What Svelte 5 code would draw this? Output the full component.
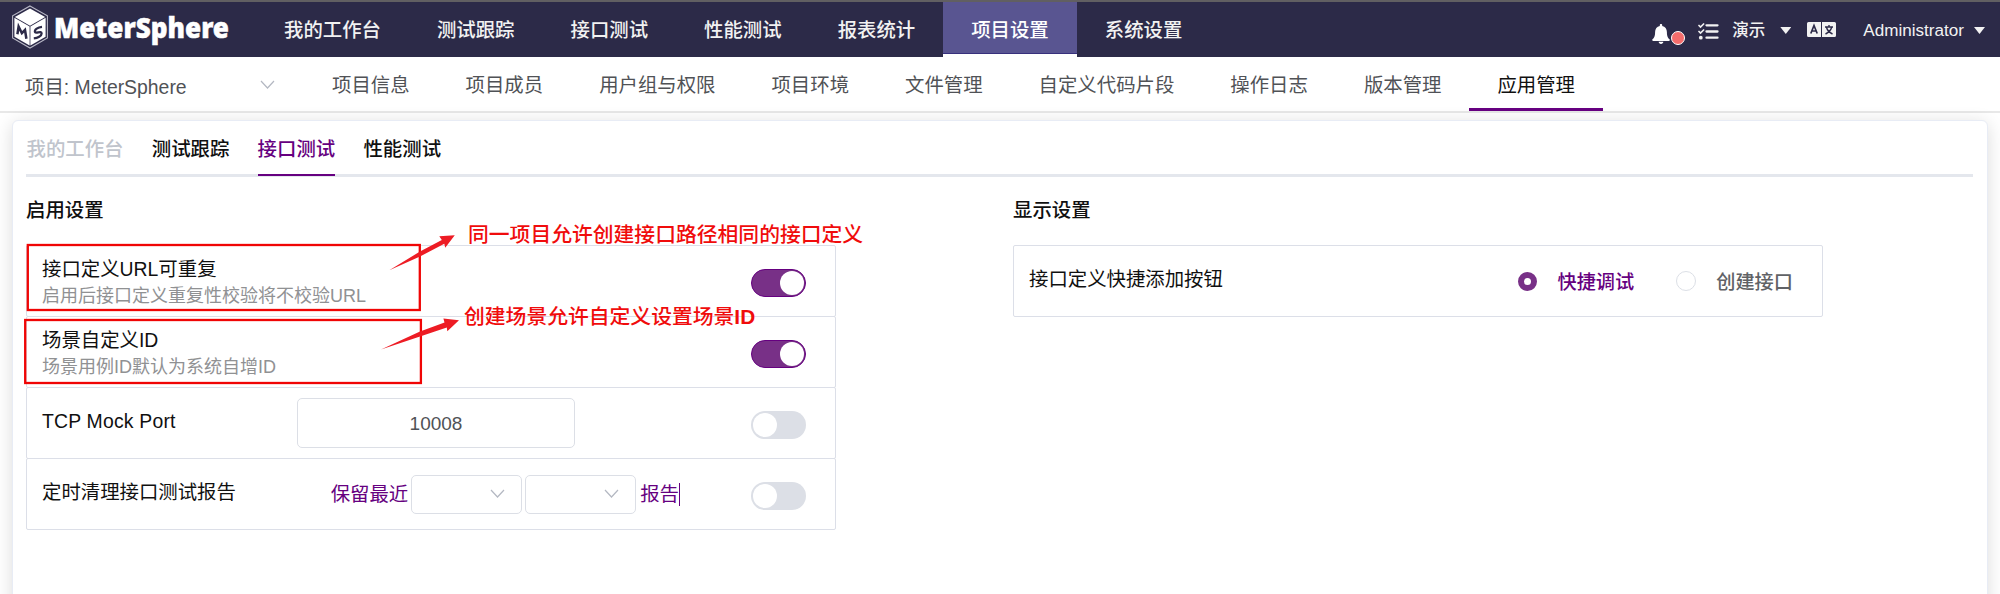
<script>
  const mainNav = ['我的工作台', '测试跟踪', '接口测试', '性能测试', '报表统计', '项目设置', '系统设置'];
  const subNav = ['项目信息', '项目成员', '用户组与权限', '项目环境', '文件管理', '自定义代码片段', '操作日志', '版本管理', '应用管理'];
  const tabs = ['我的工作台', '测试跟踪', '接口测试', '性能测试'];

  let activeMain = $state('项目设置');
  let activeSub = $state('应用管理');
  let activeTab = $state('接口测试');
  let urlRepeat = $state(true);
  let customId = $state(true);
  let mockPort = $state(false);
  let cleanReport = $state(false);
  let quick = $state('debug');
</script>

{#snippet toggle(on, flip)}
  <button class="switch" class:on onclick={flip} aria-label="switch"><span class="knob"></span></button>
{/snippet}

{#snippet chevron()}
  <svg class="chevron" width="15" height="10" viewBox="0 0 15 10"><path d="M1 1l6.5 7L14 1" fill="none" stroke="#b4b8c2" stroke-width="1.2" /></svg>
{/snippet}

<div class="page">
  <header class="top">
    <div class="brand">
      <svg width="38" height="44" viewBox="0 0 38 44">
        <path d="M19 1L36.4 10.8V33L19 43L1.6 33V10.8Z" fill="none" stroke="#b9b8c6" stroke-width="1.1" />
        <path d="M19 3.4L34.2 12L19 20.7L3.800 12Z" fill="#fff" />
        <path d="M3.4 12.800L18.600 21.4V40.600L3.4 31.8Z" fill="#fff" />
        <path d="M34.6 12.800L19.4 21.4V40.600L34.6 31.8Z" fill="#fff" />
        <path d="M6.4 29.2L7.6 21.6L10.9 28.2L14 25L15.4 33.8" fill="none" stroke="#2c2a48" stroke-width="2.5" />
        <path d="M31 21.8C27 22.2 23.2 24.4 24 27C24.8 29 30.6 25.4 30.6 28.4C30.6 31 26.6 33 22.8 33.4" fill="none" stroke="#2c2a48" stroke-width="2.3" />
      </svg>
      <svg class="word" width="180" height="46" viewBox="0 0 180 46">
        <text x="1" y="33" textLength="175" lengthAdjust="spacingAndGlyphs">MeterSphere</text>
      </svg>
    </div>
    <nav class="main-nav">
      {#each mainNav as item}
        <button class:active={item === activeMain} onclick={() => (activeMain = item)}>{item}</button>
      {/each}
    </nav>
    <div class="tools">
      <span class="bell">
        <svg width="18" height="20" viewBox="0 0 18 20"><path d="M9 0c.8 0 1.2.5 1.2 1.3v.6c3 .6 4.700 2.900 4.700 6.100 0 4.400 1 5.800 2.600 7.300.7.700.3 1.700-.7 1.700H1.200c-1 0-1.400-1-.7-1.700 1.600-1.500 2.600-2.900 2.600-7.300 0-3.200 1.700-5.500 4.700-6.100v-.6C7.800.5 8.200 0 9 0zM6.700 17.800h4.600c0 1.300-1 2.200-2.300 2.200s-2.300-.9-2.300-2.200z" fill="#fff" /></svg>
        <i class="dot"></i>
      </span>
      <svg class="list" width="21" height="17" viewBox="0 0 21 17">
        <g fill="none" stroke="#f2f2f2" stroke-linecap="round">
          <path d="M8.500 2.300H19.500M8.500 8.500H19.500M8.500 14.700H19.500" stroke-width="2.300" />
          <path d="M1 2.500l1.500 1.500L5.600 1M1 8.500l1.500 1.500L5.600 7" stroke-width="1.700" />
        </g>
        <circle cx="2.800" cy="14.700" r="1.900" fill="#f2f2f2" />
      </svg>
      <span class="org">演示</span>
      <i class="caret"></i>
      <svg class="lang" width="29" height="15" viewBox="0 0 29 15">
        <path d="M1.500 0H14V15H1.500Q0 15 0 13.500V1.500Q0 0 1.500 0ZM15 0H27.500Q29 0 29 1.500V13.500Q29 15 27.500 15H15Z" fill="#f2f2f2" />
        <path d="M3.800 11.500L7 3.500L10.200 11.500M5 9H9" fill="none" stroke="#2c2a48" stroke-width="1.700" />
        <path d="M18 5H26M22 3V5M24.800 5Q23.500 9.500 18.500 12M19.400 5Q20.500 9.500 25.500 12" fill="none" stroke="#2c2a48" stroke-width="1.400" />
      </svg>
      <span class="user">Administrator</span>
      <i class="caret"></i>
    </div>
  </header>

  <div class="sub">
    <div class="project"><span>项目: MeterSphere</span>{@render chevron()}</div>
    <nav>
      {#each subNav as item}
        <button class:active={item === activeSub} onclick={() => (activeSub = item)}>{item}</button>
      {/each}
    </nav>
  </div>

  <main class="card">
    <div class="tabs">
      {#each tabs as tab, i}
        <button class:disabled={i === 0} class:active={tab === activeTab} disabled={i === 0} onclick={() => (activeTab = tab)}>{tab}</button>
      {/each}
    </div>

    <div class="columns">
      <section>
        <h2>启用设置</h2>
        <div class="rows">
          <div class="row">
            <div class="label double"><span>接口定义URL可重复</span><small>启用后接口定义重复性校验将不校验URL</small></div>
            {@render toggle(urlRepeat, () => (urlRepeat = !urlRepeat))}
          </div>
          <div class="row">
            <div class="label double"><span>场景自定义ID</span><small>场景用例ID默认为系统自增ID</small></div>
            {@render toggle(customId, () => (customId = !customId))}
          </div>
          <div class="row">
            <div class="label single latin"><span>TCP Mock Port</span></div>
            <div class="port">10008</div>
            {@render toggle(mockPort, () => (mockPort = !mockPort))}
          </div>
          <div class="row">
            <div class="label single"><span>定时清理接口测试报告</span></div>
            <div class="keep">
              <span class="recent">保留最近</span>
              <div class="select">{@render chevron()}</div>
              <div class="select">{@render chevron()}</div>
              <span class="report">报告</span>
            </div>
            {@render toggle(cleanReport, () => (cleanReport = !cleanReport))}
          </div>
        </div>
      </section>

      <section>
        <h2>显示设置</h2>
        <div class="rows">
          <div class="row">
            <div class="label single"><span>接口定义快捷添加按钮</span></div>
            <div class="radios">
              <button class:checked={quick === 'debug'} onclick={() => (quick = 'debug')}><i></i>快捷调试</button>
              <button class:checked={quick === 'create'} onclick={() => (quick = 'create')}><i></i>创建接口</button>
            </div>
          </div>
        </div>
      </section>
    </div>
  </main>

  <div class="notes">
    <svg width="900" height="400" viewBox="0 0 900 400">
      <g fill="none" stroke="#f00505" stroke-width="2.300">
        <rect x="27.800" y="245" width="392" height="65" />
        <rect x="25.200" y="320" width="395.700" height="63" />
      </g>
      <path d="M389.300 270.300L420 251.500L441.800 240L439.300 236.200L454.800 235.200L445.200 247.800L444.300 243.800L420 256.500Z" fill="#ed1c24" />
      <path d="M381 349.500L420 331.500L444.500 322.600L443.400 318.600L459 320.300L447.300 331.300L446.800 327.600L420 336.500Z" fill="#ed1c24" />
    </svg>
    <p class="note-one">同一项目允许创建接口路径相同的接口定义</p>
    <p class="note-two">创建场景允许自定义设置场景<b>ID</b></p>
  </div>
</div>

<style>
  :global(body) { margin: 0; background: #fff; }
  .page {
    position: relative;
    width: 2000px;
    height: 594px;
    overflow: hidden;
    font-family: "Liberation Sans", "Noto Sans CJK SC", sans-serif;
    font-size: 19.4px;
    color: #101010;
    box-sizing: border-box;
  }
  .page :global(*) { box-sizing: border-box; }
  button { font: inherit; color: inherit; border: 0; background: none; padding: 0; margin: 0; white-space: nowrap; }
  .top {
    display: flex;
    height: 57px;
    background: #2c2a48;
    border-top: 2px solid #615f62;
    color: #f2f2f2;
  }
  .brand { display: flex; width: 256px; padding: 3px 0 0 10.500px; }
  .word { margin: 0 0 0 4px; overflow: visible; }
  .word text { font-family: "Noto Sans", sans-serif; font-weight: 900; font-size: 28px; fill: #fff; stroke: #fff; stroke-width: .5px; }
  .main-nav { display: flex; }
  .main-nav button { height: 55px; padding: 0 28px; font-weight: 500; line-height: 54px; }
  .main-nav .active { background: linear-gradient(#595591 51px, #37307c 51px 52px, #fff 52px); color: #fff; }
  .tools { display: flex; margin-left: auto; padding-right: 15px; align-items: flex-start; }
  .bell { display: flex; position: relative; width: 46px; padding-top: 22px; }
  .dot { position: absolute; left: 19px; top: 29px; width: 14px; height: 14px; border-radius: 50%; background: #f56c6c; border: 1.500px solid #fff; }
  .list { margin-top: 21px; }
  .org { font-size: 16.500px; font-weight: 500; line-height: 24px; margin: 16px 15px 0 13px; }
  .caret { width: 11px; height: 7px; margin-top: 25px; background: #f2f2f2; clip-path: polygon(0 0, 100% 0, 50% 100%); }
  .lang { margin: 20px 27px 0 16px; }
  .user { font-size: 17.100px; line-height: 24px; margin: 17px 10px 0 0; }
  .sub { display: flex; height: 56px; border-bottom: 2px solid #e8e8e8; color: #505256; }
  .project { display: flex; width: 304px; padding: 3px 29px 0 25px; align-items: center; justify-content: space-between; }
  .project .chevron { margin-top: -1px; }
  .sub nav { display: flex; }
  .sub nav button { height: 54px; padding: 0 28px; line-height: 56px; }
  .sub nav .active { color: #101010; border-bottom: 3px solid #660080; }
  .card {
    width: 1976px;
    height: 520px;
    margin: 7px 0 0 12px;
    padding: 0 14px 0 13px;
    border: 1px solid #e8ecf5;
    border-radius: 6px;
    box-shadow: 0 3px 18px rgba(0, 0, 0, .14);
    background: #fff;
  }
  .tabs { display: flex; gap: 28.300px; height: 56px; padding-left: .5px; border-bottom: 3px solid #e4e7ed; font-weight: 500; }
  .tabs button { height: 55px; line-height: 57px; }
  .tabs .active { color: #660080; border-bottom: 2px solid #660080; }
  .tabs .disabled { color: #c0c4cc; }
  .columns { display: flex; gap: 177px; }
  section { width: 810px; }
  h2 { margin: 19px 0 21px; font-size: 19.400px; line-height: 28px; font-weight: 500; }
  .row { display: flex; height: 72px; margin-bottom: -1px; padding: 0 29px 0 15px; border: 1px solid #dcdfe8; border-radius: 2px; align-items: center; }
  .label { display: flex; flex-direction: column; margin-right: auto; line-height: 28px; }
  .label small { font-size: 18px; line-height: 26px; color: #909193; }
  .double { margin-top: 2px; }
  .single { margin-top: -5px; }
  .latin { letter-spacing: .2px; }
  .switch { width: 55px; height: 28px; margin-top: 4px; border-radius: 14px; background: #dcdfe6; padding: 2px; display: flex; }
  .switch.on { background: #783087; border: 1px solid #660080; padding: 1px; justify-content: flex-end; }
  .knob { width: 24px; height: 24px; border-radius: 50%; background: #fff; }
  .port { width: 278px; height: 50px; margin-right: 176px; border: 1px solid #dcdfe6; border-radius: 5px; text-align: center; line-height: 49px; font-size: 19px; color: #505256; }
  .keep { display: flex; align-items: center; height: 39px; margin-right: 71px; color: #660080; }
  .recent { margin-top: -3px; }
  .select { display: flex; align-items: center; justify-content: flex-end; width: 111px; height: 39px; margin-left: 3px; padding-right: 16px; border: 1px solid #dcdfe6; border-radius: 5px; }
  .report { margin-left: 4px; line-height: 23px; border-right: 1px solid #660080; }
  .radios { display: flex; gap: 42px; font-size: 19.200px; font-weight: 500; color: #606266; }
  .radios button { display: flex; align-items: center; gap: 20px; }
  .radios i { width: 20px; height: 20px; border-radius: 50%; border: 1px solid #dcdfe6; background: #fff; }
  .radios .checked { color: #660080; }
  .radios .checked i { width: 19px; height: 19px; margin-right: 1px; border: 6px solid #783087; }
  .notes { position: absolute; inset: 0; pointer-events: none; color: #f00c0c; font-size: 20.800px; font-weight: 500; }
  .notes svg { position: absolute; left: 0; top: 0; }
  .notes p { position: absolute; margin: 0; line-height: 30px; white-space: nowrap; }
  .note-one { left: 468px; top: 220px; }
  .note-two { left: 464px; top: 302px; }
</style>
